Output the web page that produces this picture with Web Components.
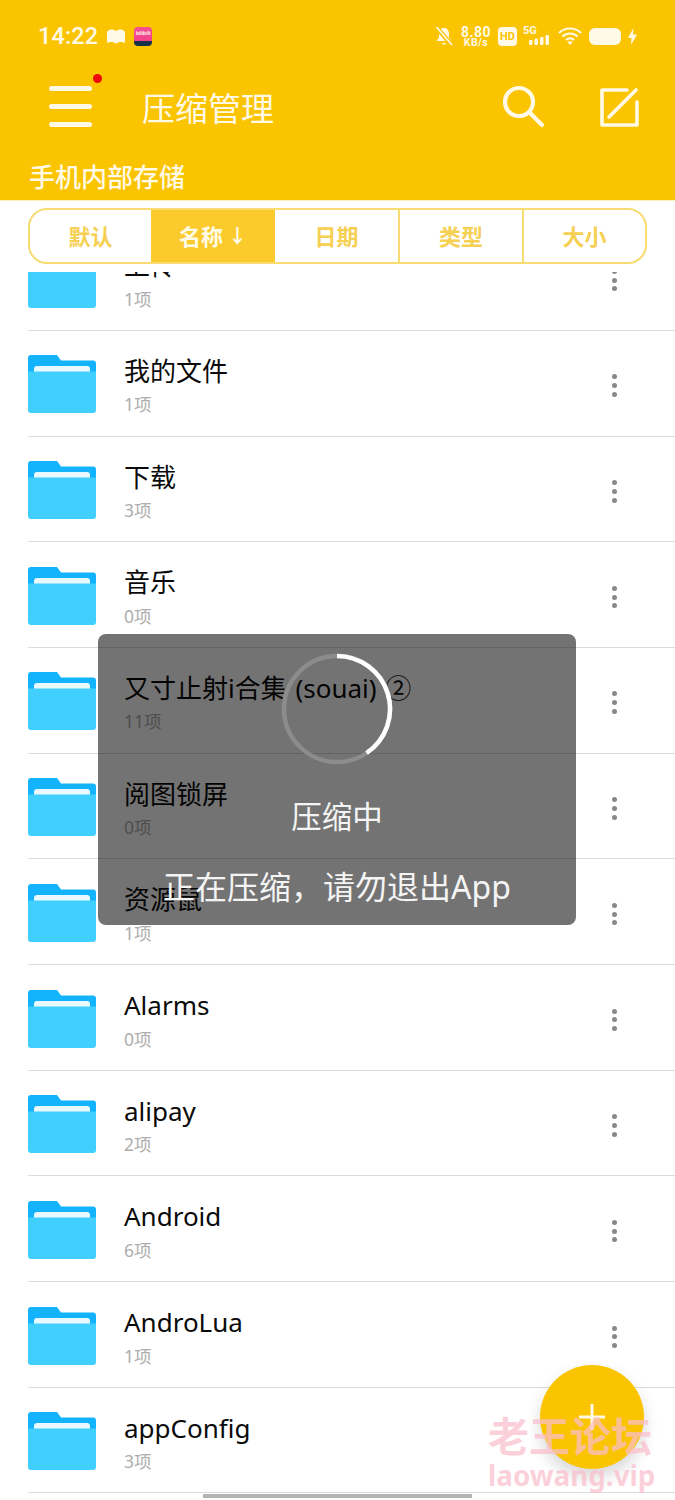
<!DOCTYPE html>
<html lang="zh">
<head>
<meta charset="utf-8">
<title>压缩管理</title>
<style>
  html, body { margin: 0; padding: 0; background: #fff; }
  body {
    width: 675px; height: 1500px; overflow: hidden; position: relative;
    display: flex; flex-direction: column;
    font-family: "Noto Sans", "Noto Sans CJK SC", sans-serif;
  }
</style>
</head>
<body>
<status-bar></status-bar>
<app-bar title="压缩管理" path="手机内部存储"></app-bar>
<sort-tabs></sort-tabs>
<folder-list>
  <folder-row count="1项">上传</folder-row>
  <folder-row count="1项">我的文件</folder-row>
  <folder-row count="3项">下载</folder-row>
  <folder-row count="0项">音乐</folder-row>
  <folder-row count="11项">又寸止射i合集 (souai) ②</folder-row>
  <folder-row count="0项">阅图锁屏</folder-row>
  <folder-row count="1项">资源鼠</folder-row>
  <folder-row count="0项">Alarms</folder-row>
  <folder-row count="2项">alipay</folder-row>
  <folder-row count="6项">Android</folder-row>
  <folder-row count="1项">AndroLua</folder-row>
  <folder-row count="3项">appConfig</folder-row>
</folder-list>
<busy-dialog title="压缩中" message="正在压缩，请勿退出App"></busy-dialog>
<fab-button></fab-button>
<water-mark></water-mark>
<home-bar></home-bar>

<script>
class StatusBar extends HTMLElement {
    constructor() {
        super();
        this._root = this.attachShadow({ mode: "open" });
        this._root.innerHTML = `
        <style>
          :host { display: flex; align-items: center; height: 72px; box-sizing: border-box; padding: 0 38px 0 38px; background: #fbc400; color: #fff9e6; }
          .time { font: 500 23.5px Roboto, sans-serif; letter-spacing: .1px; }
          .book { margin-left: 9px; }
          .bili { margin-left: 9px; width: 18px; height: 19px; border-radius: 4px; overflow: hidden; background: linear-gradient(#f54f96 0, #f4428a 72%, #16324a 72%); color: #ffe; font: 700 5px/13px "Liberation Sans", sans-serif; text-align: center; }
          .right { margin-left: auto; display: flex; align-items: center; }
          .speed { margin-left: 7px; width: 32px; text-align: center; font: 700 14px/12px Roboto, sans-serif; letter-spacing: .4px; }
          .speed small { display: block; font-size: 10.5px; line-height: 9px; }
          .hd { margin-left: 6px; width: 19px; height: 19px; border-radius: 4px; background: #fff9e6; color: #fbc400; font: 700 11px/19px Roboto, sans-serif; text-align: center; }
          .net { margin-left: 6px; position: relative; width: 30px; height: 20px; }
          .net b { position: absolute; left: 0; top: -1px; font: 700 11px/11px Roboto, sans-serif; }
          .net svg { position: absolute; left: 0; top: 0; }
          .wifi { margin-left: 5px; }
          .batt { margin-left: 7px; width: 32px; height: 17px; border-radius: 6px; background: #fff9e6; }
          .bolt { margin-left: 7px; }
        </style>
        <span class="time">14:22</span>
        <svg class="book" width="18" height="15" viewBox="0 0 18 15"><path d="M0 2.5C3-.5 6.500 0 9 2c2.500-2 6-2.500 9 .5V14c-3-1.500-6.500-1.500-9 .8C6.500 12.500 3 12.500 0 14z" fill="#fff9e6"/></svg>
        <div class="bili">bilibili</div>
        <div class="right">
          <svg width="18" height="20" viewBox="0 0 18 20" fill="none"><path d="M9 2c3.500 0 5 2.500 5 5.500v4l2.500 3.500h-15L4 11.500v-4C4 4.500 5.500 2 9 2zM7 17h4c0 2-4 2-4 0z" fill="#fff9e6"/><path d="M1 1l16 18" stroke="#fbc400" stroke-width="4.500"/><path d="M1.500 1l15.500 18" stroke="#fff9e6" stroke-width="1.800"/></svg>
          <div class="speed">8.80<small>KB/s</small></div>
          <div class="hd">HD</div>
          <div class="net"><b>5G</b><svg width="30" height="20" viewBox="0 0 30 20" fill="#fff9e6"><rect x="6" y="14" width="3.500" height="5" rx="1.200"/><rect x="11.500" y="12.500" width="3.500" height="6.500" rx="1.200"/><rect x="17" y="11" width="3.500" height="8" rx="1.200"/><rect x="22.500" y="9" width="3.500" height="10" rx="1.200"/></svg></div>
          <svg class="wifi" width="24" height="20" viewBox="0 0 24 20" fill="none" stroke="#fff9e6" stroke-width="2.200"><path d="M1 7c6-6 16-6 22 0M4.500 10.500c4-4 11-4 15 0M8 14c2.200-2.200 5.800-2.200 8 0"/><path d="M12 19l-2.500-3c1.500-1 3.500-1 5 0z" fill="#fff9e6" stroke="none"/></svg>
          <div class="batt"></div>
          <svg class="bolt" width="9" height="17" viewBox="0 0 9 17"><path d="M5.500 0L0 10h3.500L3 17l6-10.500H5z" fill="#fff9e6"/></svg>
        </div>`;
    }
}

class AppBar extends HTMLElement {
    constructor() {
        super();
        this._root = this.attachShadow({ mode: "open" });
        this._root.innerHTML = `
        <style>
          :host { display: block; height: 128px; box-sizing: border-box; background: #fbc400; color: #fff9e6; font-family: "Noto Sans CJK SC", sans-serif; }
          .bar { display: flex; align-items: center; height: 69px; padding: 0 36px 0 49px; }
          .menu { position: relative; display: flex; flex-direction: column; gap: 13px; width: 43px; }
          .menu i { display: block; height: 5px; border-radius: 3px; background: #fff9e6; }
          .menu em { position: absolute; right: -10px; top: -12px; width: 9px; height: 9px; border-radius: 50%; background: #ee0a0a; }
          .title { margin-left: 50px; font-size: 33px; line-height: 40px; }
          .tools { margin-left: auto; display: flex; align-items: center; gap: 54px; }
          .path { padding-left: 29px; font-size: 26px; font-weight: 500; line-height: 34px; margin-top: 18px; }
        </style>
        <div class="bar">
          <div class="menu"><i></i><i></i><i></i><em></em></div>
          <div class="title"></div>
          <div class="tools">
            <svg width="44" height="44" viewBox="0 0 44 44" fill="none" stroke="#fff9e6" stroke-width="4.200" stroke-linecap="round"><circle cx="18" cy="17" r="14"/><path d="M29 28l12 12"/></svg>
            <svg width="40" height="40" viewBox="0 0 40 40" fill="none" stroke="#fff9e6" stroke-width="3.600" stroke-linecap="round" stroke-linejoin="round"><path d="M28 3H3v35h35V15"/><path d="M10 30L37 3"/></svg>
          </div>
        </div>
        <div class="path"></div>`;
        this._root.querySelector(".title").textContent = this.getAttribute("title");
        this._root.querySelector(".path").textContent = this.getAttribute("path");
    }
}

class SortTabs extends HTMLElement {
    constructor() {
        super();
        this._root = this.attachShadow({ mode: "open" });
        this._root.innerHTML = `
        <style>
          :host { display: block; height: 72px; box-sizing: border-box; padding: 7px 28px 0; background: #fff; border-top: 1px solid #fdf0bd; font-family: "Noto Sans CJK SC", sans-serif; }
          .tabs { display: grid; grid-template-columns: 121px 124px 123px 124px 1fr; width: 619px; height: 56px; box-sizing: border-box; border: 2px solid #f8dc72; border-radius: 19px; overflow: hidden; }
          .tabs div { display: flex; align-items: center; justify-content: center; padding-bottom: 3px; font-size: 22px; font-weight: 700; color: #f5d052; border-left: 2px solid #f8dc72; }
          .tabs div:first-child { border-left: 0; }
          .tabs div.on { background: #fbcb2e; color: #fffbe9; border-left: 0; }
          .tabs div.on + div { border-left: 0; }
          .arrow { font-size: 19px; margin-left: 5px; }
        </style>
        <div class="tabs">
          <div>默认</div><div class="on">名称<span class="arrow">↓</span></div><div>日期</div><div>类型</div><div>大小</div>
        </div>`;
    }
}

class FolderList extends HTMLElement {
    constructor() {
        super();
        this._root = this.attachShadow({ mode: "open" });
        this._root.innerHTML = `
        <style>
          :host { display: block; flex: 1; min-height: 0; overflow: hidden; }
          .scroll { margin-top: -46.800px; }
        </style>
        <div class="scroll"><slot></slot></div>`;
    }
}

class FolderRow extends HTMLElement {
    constructor() {
        super();
        this._root = this.attachShadow({ mode: "open" });
        this._root.innerHTML = `
        <style>
          :host { display: flex; align-items: flex-start; height: 105.700px; box-sizing: border-box; margin-left: 28px; border-bottom: 1.500px solid #dcdcdc; }
          svg.folder { flex: none; margin-top: 24.500px; }
          .text { margin-left: 28px; padding-top: 22px; flex: 1; min-width: 0; }
          .name { font-size: 26px; line-height: 36px; color: #0a0a0a; white-space: nowrap; word-spacing: 2px; }
          .count { font-size: 17.500px; line-height: 24px; margin-top: 3.500px; color: #adadad; }
          .more { display: flex; flex-direction: column; gap: 3.800px; margin: 43.500px 58.500px 0 0; }
          .more i { width: 5px; height: 5px; border-radius: 50%; background: #888; }
        </style>
        <svg class="folder" width="68" height="58" viewBox="0 0 68 58">
          <path d="M3 0h26l4 5.500h32a3 3 0 0 1 3 3V20H0V3a3 3 0 0 1 3-3z" fill="#13b4fd"/>
          <path d="M9 11h50a3 3 0 0 1 3 3v4H6v-4a3 3 0 0 1 3-3z" fill="#e8f9ff"/>
          <path d="M0 16.500h68V55a3 3 0 0 1-3 3H3a3 3 0 0 1-3-3z" fill="#40cfff"/>
        </svg>
        <div class="text">
          <div class="name"><slot></slot></div>
          <div class="count"></div>
        </div>
        <div class="more"><i></i><i></i><i></i></div>`;
        this._root.querySelector(".count").textContent = this.getAttribute("count");
    }
}

class BusyDialog extends HTMLElement {
    constructor() {
        super();
        this._root = this.attachShadow({ mode: "open" });
        this._root.innerHTML = `
        <style>
          :host { position: absolute; left: 98px; top: 634px; width: 478px; height: 291px; box-sizing: border-box; padding-top: 19px; display: flex; flex-direction: column; align-items: center; border-radius: 8px; background: rgba(0,0,0,.55); color: #f4f4f4; font-family: "Noto Sans", "Noto Sans CJK SC", sans-serif; }
          .t { margin-top: 29px; font-size: 30.500px; line-height: 44px; }
          .m { margin-top: 27px; font-size: 32px; line-height: 44px; white-space: nowrap; }
        </style>
        <svg width="112" height="112" viewBox="0 0 112 112" fill="none" stroke-width="4.500">
          <circle cx="56" cy="56" r="53" stroke="#8c8c8c"/>
          <path d="M56 3A53 53 0 0 1 85.600 100" stroke="#fff"/>
        </svg>
        <div class="t"></div>
        <div class="m"></div>`;
        this._root.querySelector(".t").textContent = this.getAttribute("title");
        this._root.querySelector(".m").textContent = this.getAttribute("message");
    }
}

class FabButton extends HTMLElement {
    constructor() {
        super();
        this._root = this.attachShadow({ mode: "open" });
        this._root.innerHTML = `
        <style>
          :host { position: absolute; left: 540px; top: 1365px; width: 104px; height: 104px; border-radius: 50%; background: #fbc400; box-shadow: 0 8px 16px rgba(0,0,0,.16); display: flex; align-items: center; justify-content: center; }
        </style>
        <svg width="28" height="28" viewBox="0 0 28 28" stroke="#fff9e6" stroke-width="3"><path d="M14 1v26M1 14h26"/></svg>`;
    }
}

class WaterMark extends HTMLElement {
    constructor() {
        super();
        this._root = this.attachShadow({ mode: "open" });
        this._root.innerHTML = `
        <style>
          :host { position: absolute; left: 488px; top: 1408px; color: rgba(250,190,205,.72); font-family: "Noto Sans CJK SC", sans-serif; font-weight: 700; }
          div { white-space: nowrap; }
          .a { font-size: 41px; line-height: 52px; }
          .b { font: 700 27.800px/34px "Noto Sans", sans-serif; margin-top: -2px; }
        </style>
        <div class="a">老王论坛</div>
        <div class="b">laowang.vip</div>`;
    }
}

class HomeBar extends HTMLElement {
    constructor() {
        super();
        this._root = this.attachShadow({ mode: "open" });
        this._root.innerHTML = `
        <style>
          :host { position: absolute; left: 203px; top: 1494px; width: 269px; height: 4px; background: #b4b4b4; }
        </style>`;
    }
}

window.customElements.define("status-bar", StatusBar);
window.customElements.define("app-bar", AppBar);
window.customElements.define("sort-tabs", SortTabs);
window.customElements.define("folder-list", FolderList);
window.customElements.define("folder-row", FolderRow);
window.customElements.define("busy-dialog", BusyDialog);
window.customElements.define("fab-button", FabButton);
window.customElements.define("water-mark", WaterMark);
window.customElements.define("home-bar", HomeBar);
</script>
</body>
</html>
